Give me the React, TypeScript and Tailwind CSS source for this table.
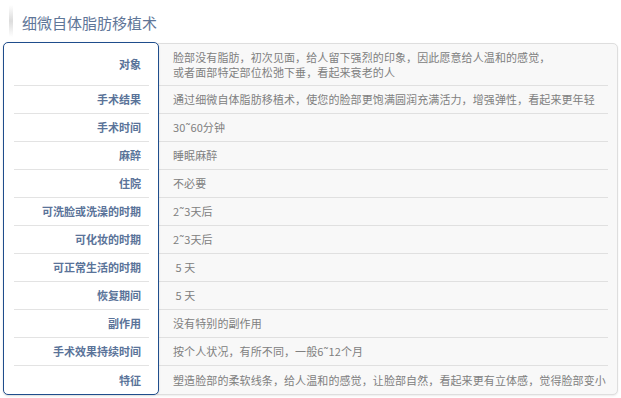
const rows: { label: string; value: string[]; tall?: boolean }[] = [
  {
    label: '对象',
    value: [
      '脸部没有脂肪，初次见面，给人留下强烈的印象，因此愿意给人温和的感觉，',
      '或者面部特定部位松弛下垂，看起来衰老的人',
    ],
    tall: true,
  },
  { label: '手术结果', value: ['通过细微自体脂肪移植术，使您的脸部更饱满圆润充满活力，增强弹性，看起来更年轻'] },
  { label: '手术时间', value: ['30˜60分钟'] },
  { label: '麻醉', value: ['睡眠麻醉'] },
  { label: '住院', value: ['不必要'] },
  { label: '可洗脸或洗澡的时期', value: ['2˜3天后'] },
  { label: '可化妆的时期', value: ['2˜3天后'] },
  { label: '可正常生活的时期', value: [' 5 天'] },
  { label: '恢复期间', value: [' 5 天'] },
  { label: '副作用', value: ['没有特别的副作用'] },
  { label: '手术效果持续时间', value: ['按个人状况，有所不同，一般6˜12个月'] },
  { label: '特征', value: ['塑造脸部的柔软线条，给人温和的感觉，让脸部自然，看起来更有立体感，觉得脸部变小'] },
];

export default function App() {
  return (
    <div
      className="w-[621px] h-[398px] bg-white overflow-hidden"
      style={{ fontFamily: '"Noto Sans CJK SC", "Noto Sans", sans-serif' }}
    >
      {/* Title */}
      <div className="flex items-center h-[42px] pl-[9px]">
        <div className="w-[4px] h-[32px] bg-gradient-to-b from-white via-[#dcdcdc] to-white" />
        <h1 className="ml-[9px] text-[15px] leading-none text-[#5f7698] pt-[2px]">细微自体脂肪移植术</h1>
      </div>

      {/* Table */}
      <div className="flex pl-[3px] pr-[3px]">
        {/* label column */}
        <div className="relative z-10 shrink-0 w-[156px] bg-white border border-[#1f4d8c] rounded-[5px] shadow-[0_1px_2px_rgba(0,0,0,0.15)]">
          {rows.map((r, i) => (
            <div
              key={r.label}
              className={`flex items-center justify-end pr-[8px] ml-[10px] mr-[9px] ${
                r.tall ? 'h-[43px]' : 'h-[28px]'
              } ${i < rows.length - 1 ? 'border-b border-[#e3e3e3]' : ''}`}
            >
              <span className="text-[11px] font-bold text-[#5a7399] whitespace-nowrap">{r.label}</span>
            </div>
          ))}
        </div>

        {/* value column */}
        <div className="flex-1 min-w-0 -ml-[2px] mt-[1px] bg-[#f8f8f8] border border-[#dedede] rounded-r-[5px] shadow-[0_1px_2px_rgba(0,0,0,0.08)]">
          {rows.map((r, i) => (
            <div
              key={r.label}
              className={`flex flex-col justify-center pl-[15px] mr-[9px] ${
                r.tall ? 'h-[42px]' : 'h-[28px]'
              } ${i < rows.length - 1 ? 'border-b border-[#e0e0e0]' : ''}`}
            >
              {r.value.map((v) => (
                <span key={v} className="block text-[11px] tracking-[0.1px] leading-[15px] text-[#808080] whitespace-pre">
                  {v}
                </span>
              ))}
            </div>
          ))}
        </div>
      </div>
    </div>
  );
}
